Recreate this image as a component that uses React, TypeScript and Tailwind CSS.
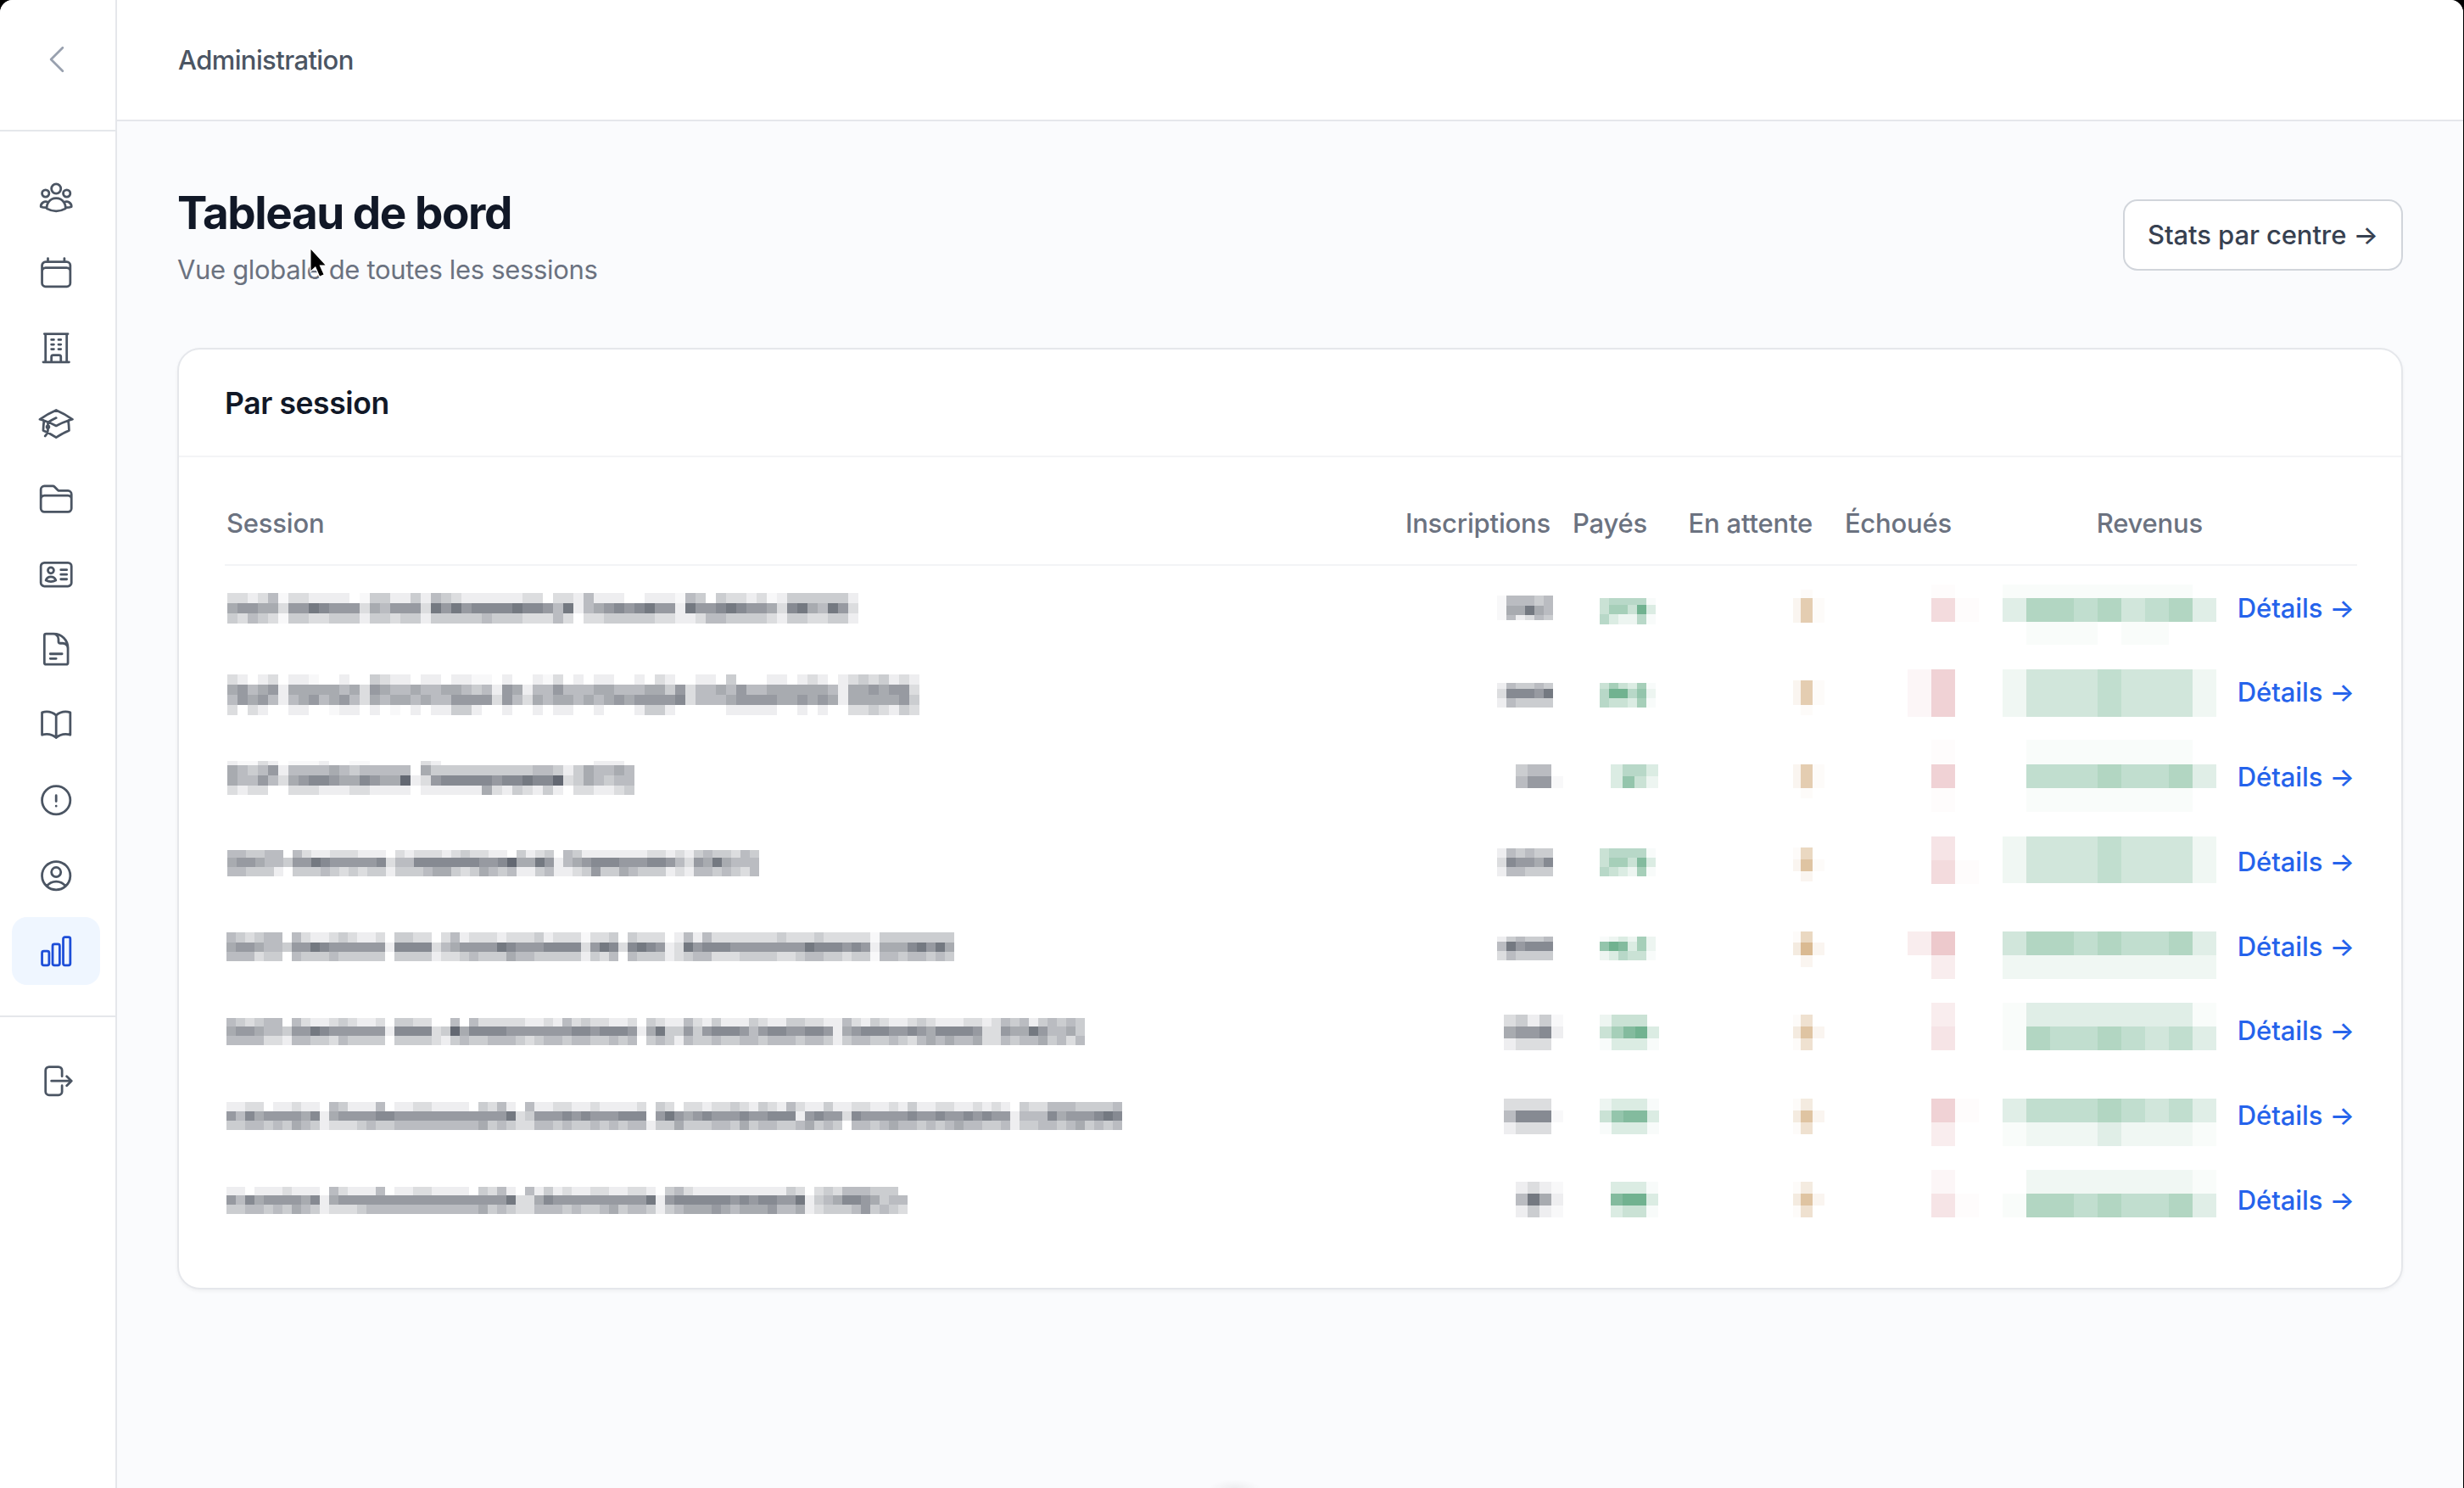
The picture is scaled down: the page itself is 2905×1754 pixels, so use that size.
import {
  HiOutlineAcademicCap,
  HiOutlineArrowRightOnRectangle,
  HiOutlineBookOpen,
  HiOutlineBuildingOffice,
  HiOutlineCalendar,
  HiOutlineChartBar,
  HiOutlineChevronLeft,
  HiOutlineDocumentText,
  HiOutlineExclamationCircle,
  HiOutlineFolder,
  HiOutlineIdentification,
  HiOutlineUserCircle,
  HiOutlineUserGroup,
} from "react-icons/hi2";

const navItems = [
  { id: "users", icon: HiOutlineUserGroup },
  { id: "calendar", icon: HiOutlineCalendar },
  { id: "building", icon: HiOutlineBuildingOffice },
  { id: "academic", icon: HiOutlineAcademicCap },
  { id: "folder", icon: HiOutlineFolder },
  { id: "identity", icon: HiOutlineIdentification },
  { id: "document", icon: HiOutlineDocumentText },
  { id: "book", icon: HiOutlineBookOpen },
  { id: "alert", icon: HiOutlineExclamationCircle },
  { id: "account", icon: HiOutlineUserCircle },
  { id: "stats", icon: HiOutlineChartBar, active: true },
];

// [height, intensity of each column: 0-9, "." for barely visible, spaces ignored]
type Band = [number, string];

type Redaction = {
  x: number;
  y: number;
  cols: number | number[];
  bands: Band[];
};

type Row = {
  name: Redaction;
  inscriptions: Redaction;
  payes: Redaction;
  attente: Redaction;
  echoues: Redaction;
  revenus: Redaction;
};

const GRAY = "#636872";
const GREEN = "#5fa882";
const TAN = "#cfa673";
const PINK = "#e4aeb3";
const MINT = "#74b592";

const TAN_COLS = [9, 14, 14];

const rows: Row[] = [
  {
    name: {
      x: 3, y: 32, cols: 12,
      bands: [
        [12, "22124 . 2211110 . 33113 1 4321 1111 1220 22 1 4111 0011 1 . 4303 2212 . 1 333333 1"],
        [12, "56655 2 6687666 2 54666 2 8686 7777 8776 48 1 4567 6786 6 1 8667 8766 5 2 785486 2"],
        [12, "32432 . 3322333 1 33233 1 3333 3433 3222 42 0 2233 3332 2 1 1244 3333 2 1 332233 1"],
      ],
    },
    inscriptions: { x: 124, y: 34.5, cols: 11, bands: [[12, ".44434"], [11, ".55854"], [6, ".41243"]] },
    payes: { x: 43, y: 37.5, cols: 11, bands: [[8, "34444."], [11, "355382"], [12, "42114."]] },
    attente: { x: 157, y: 27.5, cols: TAN_COLS, bands: [[10, "0.0"], [29, "15."]] },
    echoues: { x: 97, y: 21.5, cols: 28, bands: [[16, "0.0"], [28, "04."]] },
    revenus: { x: 46, y: 21.5, cols: 28, bands: [[16, "........0"], [28, "255453452"], [27, "0...0..00"]] },
  },
  {
    name: {
      x: 3, y: 28.7, cols: 12,
      bands: [
        [12, "21012 0 11.0010 0 3211 0110 11.. 0 10 0 1.20 1011 0010 210 0 1103 0001 1012 10 1 2323 121"],
        [12, "56456 1 5555545 2 6544 5445 5434 1 65 1 4464 4455 4445 536 2 4454 6445 5555 54 1 5565 662"],
        [12, "46564 1 4564564 2 5455 4544 6666 2 64 2 5455 4545 6566 667 2 4445 6666 5565 65 1 5555 563"],
        [12, "20210 0 1100.11 0 10.0 1011 3310 0 10 0 1011 0010 0013 310 0 0001 1111 0010 10 0 2232 132"],
      ],
    },
    inscriptions: { x: 124, y: 38.7, cols: 11, bands: [[7, "143343"], [11, "277768"], [11, "143333"]] },
    payes: { x: 43, y: 38.7, cols: 11, bands: [[7, "35325."], [11, "488461"], [11, "43325."]] },
    attente: { x: 157, y: 35.7, cols: TAN_COLS, bands: [[29, "15."], [12, "0.0"]] },
    echoues: { x: 97, y: 22.7, cols: 28, bands: [[56, "150"]] },
    revenus: { x: 46, y: 22.7, cols: 28, bands: [[28, "133343331"], [28, "133343331"]] },
  },
  {
    name: {
      x: 3, y: 31, cols: 12,
      bands: [
        [5, "1..21 0 ...100..0000 0 2100 0000 0000 00 0 0 01110"],
        [12, "54346 1 4444 5434 4444 0 5333 3333 3334 43 1 3 54454"],
        [12, "54464 2 5677 6557 6559 1 2677 7776 7787 79 2 3 54344"],
        [11, "21220 0 2221 1122 1111 0 1111 1152 1321 31 0 2 21123"],
      ],
    },
    inscriptions: { x: 146, y: 35, cols: 14, bands: [[14, "3440"], [14, "466."]] },
    payes: { x: 56, y: 35, cols: 14, bands: [[14, "2442"], [14, "2631"]] },
    attente: { x: 157, y: 35, cols: TAN_COLS, bands: [[28, "15."], [12, "0.0"]] },
    echoues: { x: 97, y: 6, cols: 28, bands: [[29, "0.0"], [28, "050"], [28, "0.0"]] },
    revenus: { x: 46, y: 6, cols: 28, bands: [[29, "0.......0"], [28, "044454452"], [28, "0.......0"]] },
  },
  {
    name: {
      x: 2.6, y: 36, cols: 11,
      bands: [
        [9, "443344 0 42112 22111 0 2122 2123 2211 0312 3 0 4311 1111 1221 2 1 3433 243"],
        [11, "566544 3 66876 66667 2 4477 7777 7667 9558 6 1 4567 7766 6776 4 2 6585 444"],
        [11, "443331 0 33343 23233 1 3334 5532 3543 4113 4 1 1236 3354 3331 2 1 4434 324"],
      ],
    },
    inscriptions: { x: 124, y: 34, cols: 11, bands: [[11, "143433"], [11, "276657"], [11, "144333"]] },
    payes: { x: 43, y: 34, cols: 11, bands: [[11, "34444."], [11, "355372"], [11, "43215."]] },
    attente: { x: 157, y: 33, cols: TAN_COLS, bands: [[14, ".40"], [14, "16."], [12, "010"]] },
    echoues: { x: 97, y: 20, cols: 28, bands: [[28, "030"], [28, "04."]] },
    revenus: { x: 46, y: 20, cols: 28, bands: [[28, "133343331"], [27, "133343331"]] },
  },
  {
    name: {
      x: 2, y: 33.3, cols: 11,
      bands: [
        [12, "432344 0 42112 32112 0 3322 0 24122 21222 31222 . 223 0 3222 01 41422 22222 32223 22222 . 33333333"],
        [11, "566544 3 66876 66666 1 7777 2 45666 68766 67777 2 687 2 7876 12 86777 66666 66687 77676 1 55578685"],
        [10.5, "444233 0 43334 33333 0 3333 1 22343 33544 33333 1 324 0 4333 12 34422 23333 22344 33233 . 44344343"],
      ],
    },
    inscriptions: { x: 124, y: 38.3, cols: 11, bands: [[6, "134334"], [11, "486777"], [11, "243333"]] },
    payes: { x: 43, y: 38.3, cols: 11, bands: [[6, ".12151"], [11, "687251"], [11, "12433."]] },
    attente: { x: 157, y: 32.3, cols: TAN_COLS, bands: [[13, ".40"], [15, "271"], [14, "010"]] },
    echoues: { x: 97, y: 32.3, cols: 28, bands: [[28, "260"], [28, "020"]] },
    revenus: { x: 46, y: 32.3, cols: 28, bands: [[28, "355454452"], [28, "111111111"]] },
  },
  {
    name: {
      x: 2, y: 34.5, cols: 11,
      bands: [
        [10, "432344 0 42112 32112 0 3322 0 0 40422 22211 21423 22112 0 32 11 4213 1113 2113 3221 1 42132 11232 11122 1 2 434134343"],
        [11, "566544 3 66876 66666 1 7777 2 3 95777 76666 66677 67776 1 58 33 6367 7764 6776 6776 1 56777 66765 77776 2 2 655864453"],
        [11, "444422 1 44332 43333 0 3333 2 1 34334 44323 44344 33434 0 34 31 4334 3344 3444 3443 1 34433 43245 45445 2 2 434453424"],
      ],
    },
    inscriptions: { x: 132, y: 30.8, cols: 14, bands: [[14, "2313."], [14, "56671"], [14, "1222"]] },
    payes: { x: 42.5, y: 30.8, cols: 14, bands: [[14, "13330"], [14, "35782"], [14, ".222."]] },
    attente: { x: 157, y: 30.8, cols: TAN_COLS, bands: [[14, ".30"], [14, "261"], [14, ".30"]] },
    echoues: { x: 97, y: 17, cols: 28, bands: [[28, "020"], [28, "030"]] },
    revenus: { x: 46, y: 17, cols: 28, bands: [[28, ".2222222."], [28, ".54454342"]] },
  },
  {
    name: {
      x: 2, y: 33.5, cols: 11,
      bands: [
        [11, "11220 11211 0 43111 40112 21111 03241 04 1122 1121 1112 0 32022 12232 13214 21131 1 2211 2131 1221 1212 1 0 32244 433334"],
        [11, "64756 66657 1 56666 77666 66666 66668 23 6667 6766 6777 0 68656 76667 66777 16766 2 7666 6676 6766 7676 6 1 44475 666787"],
        [11, "33443 43543 1 22234 33444 44444 45343 22 4434 3343 4344 1 33533 34435 34433 45343 0 4434 5443 4345 4433 4 1 33443 453434"],
      ],
    },
    inscriptions: { x: 132, y: 29.8, cols: 14, bands: [[14, "2222"], [14, "4777."], [14, "1222"]] },
    payes: { x: 42.5, y: 29.8, cols: 14, bands: [[14, "1222."], [14, "36772"], [14, ".222."]] },
    attente: { x: 157, y: 29.8, cols: TAN_COLS, bands: [[14, ".20"], [14, "261"], [14, ".30"]] },
    echoues: { x: 97, y: 29.8, cols: 28, bands: [[28, "05."], [28, "020"]] },
    revenus: { x: 46, y: 29.8, cols: 28, bands: [[28, "244454342"], [28, ".1112111."]] },
  },
  {
    name: {
      x: 2, y: 33.8, cols: 11,
      bands: [
        [10, "11011 12111 0 42111 40112 21111 03241 04 1312 1122 1122 1 0 34211 11111 11132 0 23244 43330"],
        [11, "64756 66657 1 56666 66666 66666 66668 22 5766 6666 6666 8 1 67777 77676 77668 1 34577 65344"],
        [11, "33443 43543 1 22234 44444 44444 45343 22 4443 4334 5344 3 1 34555 65455 56445 1 23334 63432"],
      ],
    },
    inscriptions: { x: 146, y: 28, cols: 14, bands: [[14, "121."], [14, "4851"], [14, "131."]] },
    payes: { x: 56, y: 28, cols: 14, bands: [[14, "222."], [14, "7882"], [14, "233."]] },
    attente: { x: 157, y: 28, cols: TAN_COLS, bands: [[14, ".20"], [14, "261"], [14, ".30"]] },
    echoues: { x: 97, y: 14, cols: 28, bands: [[28, "010"], [28, "03."]] },
    revenus: { x: 46, y: 14, cols: 28, bands: [[28, "01111111."], [28, ".55454452"]] },
  },
];

// Pixelated block drawn in place of a private value
function Redacted({ data, color }: { data: Redaction; color: string }) {
  const rects = [];
  let top = data.y;
  for (const [height, pattern] of data.bands) {
    const cells = pattern.replace(/ /g, "");
    let left = data.x;
    for (let i = 0; i < cells.length; i++) {
      const width = typeof data.cols === "number" ? data.cols : data.cols[i];
      const level = cells[i] === "." ? 0.4 : Number(cells[i]);
      if (level > 0) {
        rects.push(
          <rect key={`${top}-${i}`} x={left} y={top} width={width} height={height} fillOpacity={level / 9} />
        );
      }
      left += width;
    }
    top += height;
  }
  return (
    <svg className="block h-full w-full overflow-visible" fill={color} shapeRendering="crispEdges" aria-hidden="true">
      {rects}
    </svg>
  );
}

function Sidebar() {
  return (
    <aside className="flex w-[138px] shrink-0 flex-col border-r-2 border-[#e5e7eb] bg-white">
      <div className="flex h-[155px] border-b-2 border-[#e5e7eb] pt-[48px] pl-[45px]">
        <HiOutlineChevronLeft className="size-[44px] text-gray-400" />
      </div>
      <nav className="flex flex-col gap-[8.85px] pt-[37.5px] pb-[36px] pl-[14px]">
        {navItems.map(({ id, icon: Icon, active }) => (
          <a
            key={id}
            className={
              active
                ? "flex h-[80px] w-[104px] items-center justify-center rounded-[18px] bg-[#eff6ff] text-[#1d4ed8]"
                : "flex h-[80px] w-[104px] items-center justify-center rounded-[18px] text-[#4b5563]"
            }
          >
            <Icon className="size-[44.4px]" />
          </a>
        ))}
      </nav>
      <div className="border-t-2 border-[#e5e7eb] pt-[53px] pl-[44px] text-[#4b5563]">
        <HiOutlineArrowRightOnRectangle className="size-[44.4px]" />
      </div>
    </aside>
  );
}

const GRID = "grid grid-cols-[1376px_202px_114px_195px_163px_296px_167px]";

function SessionsTable() {
  return (
    <section className="rounded-[27px] border-2 border-[#e5e7eb] bg-white shadow-[0_2px_4px_rgba(0,0,0,0.05)]">
      <div className="flex h-[127px] items-center border-b-2 border-[#f3f4f6] px-[54px] pt-[2px]">
        <h2 className="text-[35.5px] leading-none font-semibold tracking-[-0.4px] text-[#111827]">Par session</h2>
      </div>
      <div className="pt-[52px] pr-[52px] pb-[53.5px] pl-[54px]">
        <div className={`${GRID} h-[75.5px] border-b-2 border-[#f3f4f6] text-right text-[31px] leading-[52px] font-medium tracking-[-0.2px] text-[#6b7280]`}>
          <span className="pl-[2px] text-left">Session</span>
          <span className="pr-[15px]">Inscriptions</span>
          <span className="pr-[15px]">Payés</span>
          <span className="pr-[15px]">En attente</span>
          <span className="pr-[14px]">Échoués</span>
          <span className="pr-[14px]">Revenus</span>
          <span />
        </div>
        {rows.map((row, i) => (
          <div key={i} className={`${GRID} h-[99.8px]`}>
            <Redacted data={row.name} color={GRAY} />
            <Redacted data={row.inscriptions} color={GRAY} />
            <Redacted data={row.payes} color={GREEN} />
            <Redacted data={row.attente} color={TAN} />
            <Redacted data={row.echoues} color={PINK} />
            <Redacted data={row.revenus} color={MINT} />
            <a className="pr-[2px] text-right text-[31px] leading-[99.8px] font-medium tracking-[-0.1px] whitespace-nowrap text-[#2563eb]">
              Détails →
            </a>
          </div>
        ))}
      </div>
    </section>
  );
}

export default function App() {
  return (
    <div className="relative h-[1754px] w-[2905px] overflow-hidden bg-black pr-px font-['Inter',sans-serif]">
      <div className="flex h-full overflow-hidden rounded-t-[15px] bg-[#fafbfd]">
        <Sidebar />
        <div className="flex-1">
          <header className="flex h-[143px] items-center border-b-2 border-[#e5e7eb] bg-white px-[72px] pt-[1px] text-[31px] font-medium tracking-[-0.6px] text-[#4b5563]">
            Administration
          </header>
          <main className="px-[71px] pt-[73px]">
            <div className="mb-[70px] flex items-center justify-between">
              <div>
                <h1 className="text-[53px] leading-[71px] font-bold tracking-[-1.45px] text-[#111827]">Tableau de bord</h1>
                <p className="mt-[9px] text-[31px] leading-[44px] tracking-[-0.33px] text-[#6b7280]">
                  Vue globale de toutes les sessions
                </p>
              </div>
              <button className="-mt-[2px] h-[84px] w-[330px] rounded-[17px] border-2 border-[#d1d5db] bg-white text-[31px] font-medium tracking-[-0.1px] whitespace-nowrap text-[#374151]">
                Stats par centre →
              </button>
            </div>
            <SessionsTable />
          </main>
        </div>
      </div>
      <svg className="absolute top-[288px] left-[361px] h-[44px] w-[28px]" viewBox="0 0 28 44">
        <path
          d="M5.500 6v25l5.500-5 5 11.500 4.500-2-5-11h7z"
          fill="#000"
          stroke="#fff"
          strokeWidth="2.500"
          paintOrder="stroke"
        />
      </svg>
      <div className="absolute bottom-0 left-[1425px] h-[10px] w-[62px] bg-radial-[at_50%_100%] from-black/5 to-transparent to-70%" />
    </div>
  );
}
